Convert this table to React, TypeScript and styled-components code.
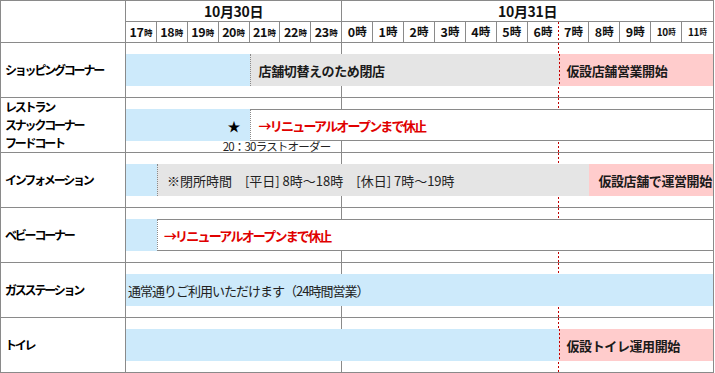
import React from "react";
import styled, { createGlobalStyle, css } from "styled-components";

const LINE = "#8a8a8a";
const RED_LINE = "#c00000";

const GlobalStyle = createGlobalStyle`
  html, body { margin: 0; padding: 0; background: #ffffff; }
  body {
    font-family: "Noto Sans CJK JP", "Noto Sans", sans-serif;
    color: #111;
  }
`;

const Table = styled.div`
  box-sizing: border-box;
  width: 714px;
  border: 1px solid ${LINE};
  background: #fff;
`;

const gridCols = css`
  display: grid;
  grid-template-columns: 125px repeat(19, minmax(0, 1fr));
`;

const HeaderGrid = styled.div`
  ${gridCols};
  grid-template-rows: 21px 20px;
`;

const Corner = styled.div`
  grid-column: 1;
  grid-row: 1 / 3;
  border-right: 1px solid ${LINE};
`;

const DateCell = styled.div<{ $from: number; $to: number; $divider?: boolean }>`
  grid-row: 1;
  grid-column: ${(p) => p.$from + 1} / ${(p) => p.$to + 2};
  border-bottom: 1px solid ${LINE};
  ${(p) => p.$divider && `border-right: 1px solid ${LINE};`}
  display: flex;
  align-items: center;
  justify-content: center;
  font-size: 14px;
  font-weight: 700;
  letter-spacing: -0.3px;
  line-height: 1;
`;

const HourCell = styled.div<{ $edge: "solid" | "red" | "none" }>`
  grid-row: 2;
  display: flex;
  align-items: center;
  justify-content: center;
  white-space: nowrap;
  font-weight: 700;
  line-height: 1;
  ${(p) => p.$edge === "solid" && `border-right: 1px solid ${LINE};`}
  ${(p) =>
    p.$edge === "red" &&
    `background: linear-gradient(to bottom, ${RED_LINE} 50%, transparent 50%) right top / 1px 4px repeat-y;`}
`;

const Num = styled.span<{ $kind: "a" | "b" | "c" }>`
  font-size: ${(p) => (p.$kind === "c" ? "10px" : "12.5px")};
  letter-spacing: -0.4px;
`;

const Ji = styled.span<{ $kind: "a" | "b" | "c" }>`
  font-size: ${(p) => (p.$kind === "a" ? "8.5px" : p.$kind === "b" ? "11.5px" : "7.5px")};
  margin-left: 0.5px;
`;

const BodyRow = styled.div`
  ${gridCols};
  grid-template-rows: 11px 32px 11px;
  border-top: 1px solid ${LINE};
`;

const RowLabel = styled.div`
  grid-column: 1;
  grid-row: 1 / -1;
  border-right: 1px solid ${LINE};
  display: flex;
  flex-direction: column;
  justify-content: center;
  padding-left: 4px;
  font-size: 12px;
  font-weight: 700;
  letter-spacing: -2.2px;
  line-height: 18px;
  white-space: nowrap;
  color: #000;
`;

const Guide = styled.div<{ $from: number; $to: number; $red?: boolean }>`
  grid-row: 1 / -1;
  grid-column: ${(p) => p.$from + 1} / ${(p) => p.$to + 2};
  ${(p) =>
    p.$red
      ? `background: linear-gradient(to bottom, ${RED_LINE} 50%, transparent 50%) right top / 1px 4px repeat-y;`
      : `border-right: 1px solid ${LINE};`}
`;

type Tone = "blue" | "gray" | "pink" | "box";

const toneBg: Record<Tone, string> = {
  blue: "#cdeafb",
  gray: "#e5e5e5",
  pink: "#ffcccc",
  box: "#ffffff",
};

const Bar = styled.div<{
  $from: number;
  $to: number;
  $tone: Tone;
  $edge?: "gray" | "red";
  $align?: "start" | "end";
  $pad?: number;
}>`
  grid-row: 2;
  grid-column: ${(p) => p.$from + 1} / ${(p) => p.$to + 2};
  background: ${(p) => toneBg[p.$tone]};
  ${(p) =>
    p.$tone === "box" &&
    `border-top: 1px solid ${LINE}; border-bottom: 1px solid ${LINE}; box-sizing: border-box;`}
  ${(p) => p.$edge === "gray" && `border-left: 1px dotted ${LINE};`}
  ${(p) =>
    p.$edge === "red" &&
    `background-image: linear-gradient(to bottom, ${RED_LINE} 50%, transparent 50%);
     background-size: 1px 4px; background-repeat: repeat-y; background-position: left top;`}
  display: flex;
  align-items: center;
  justify-content: ${(p) => (p.$align === "end" ? "flex-end" : "flex-start")};
  padding: ${(p) => (p.$align === "end" ? `0 ${p.$pad ?? 8}px 0 0` : `0 0 0 ${p.$pad ?? 8}px`)};
  overflow: hidden;
  white-space: nowrap;
  min-width: 0;
`;

const StrongText = styled.span`
  font-size: 13px;
  font-weight: 700;
  letter-spacing: -0.4px;
  color: #1a1a1a;
`;

const AlertText = styled.span`
  font-size: 13px;
  font-weight: 700;
  letter-spacing: -1.8px;
  color: #e00000;
`;

const PlainText = styled.span<{ $tight?: number }>`
  font-size: 13px;
  font-weight: 400;
  letter-spacing: ${(p) => p.$tight ?? -0.5}px;
  color: #222;
`;

const Star = styled.span`
  font-size: 13px;
  color: #000;
`;

const Note = styled.div<{ $from: number; $to: number }>`
  grid-row: 3;
  grid-column: ${(p) => p.$from + 1} / ${(p) => p.$to + 2};
  padding-left: 4px;
  font-size: 11.5px;
  line-height: 11px;
  letter-spacing: -0.8px;
  white-space: nowrap;
  color: #222;
`;

const hours: { n: string; kind: "a" | "b" | "c" }[] = [
  ...["17", "18", "19", "20", "21", "22", "23"].map((n) => ({ n, kind: "a" as const })),
  ...["0", "1", "2", "3", "4", "5", "6", "7", "8", "9"].map((n) => ({ n, kind: "b" as const })),
  ...["10", "11"].map((n) => ({ n, kind: "c" as const })),
];

const Guides = () => (
  <>
    <Guide $from={1} $to={7} />
    <Guide $from={8} $to={14} $red />
  </>
);

export default function App() {
  return (
    <>
      <GlobalStyle />
      <Table>
        <HeaderGrid>
          <Corner />
          <DateCell $from={1} $to={7} $divider>
            10月30日
          </DateCell>
          <DateCell $from={8} $to={19}>
            10月31日
          </DateCell>
          {hours.map((h, i) => (
            <HourCell
              key={h.n}
              $edge={i === 13 ? "red" : i === 18 ? "none" : "solid"}
            >
              <Num $kind={h.kind}>{h.n}</Num>
              <Ji $kind={h.kind}>時</Ji>
            </HourCell>
          ))}
        </HeaderGrid>

        <BodyRow>
          <RowLabel>ショッピングコーナー</RowLabel>
          <Guides />
          <Bar $from={1} $to={4} $tone="blue" />
          <Bar $from={5} $to={14} $tone="gray" $edge="gray">
            <StrongText>店舗切替えのため閉店</StrongText>
          </Bar>
          <Bar $from={15} $to={19} $tone="pink" $edge="red">
            <StrongText>仮設店舗営業開始</StrongText>
          </Bar>
        </BodyRow>

        <BodyRow>
          <RowLabel>
            <span>レストラン</span>
            <span>スナックコーナー</span>
            <span>フードコート</span>
          </RowLabel>
          <Guides />
          <Bar $from={1} $to={4} $tone="blue" $align="end" $pad={9}>
            <Star>★</Star>
          </Bar>
          <Bar $from={5} $to={19} $tone="box" $edge="gray">
            <AlertText>→リニューアルオープンまで休止</AlertText>
          </Bar>
          <Note $from={4} $to={8}>20：30ラストオーダー</Note>
        </BodyRow>

        <BodyRow>
          <RowLabel>インフォメーション</RowLabel>
          <Guides />
          <Bar $from={1} $to={1} $tone="blue" />
          <Bar $from={2} $to={15} $tone="gray" $edge="gray" $pad={9}>
            <PlainText $tight={0}>※閉所時間　[平日] 8時～18時　[休日] 7時～19時</PlainText>
          </Bar>
          <Bar $from={16} $to={19} $tone="pink" $pad={9}>
            <StrongText>仮設店舗で運営開始</StrongText>
          </Bar>
        </BodyRow>

        <BodyRow>
          <RowLabel>ベビーコーナー</RowLabel>
          <Guides />
          <Bar $from={1} $to={1} $tone="blue" />
          <Bar $from={2} $to={19} $tone="box" $edge="gray" $pad={6}>
            <AlertText>→リニューアルオープンまで休止</AlertText>
          </Bar>
        </BodyRow>

        <BodyRow>
          <RowLabel>ガスステーション</RowLabel>
          <Guides />
          <Bar $from={1} $to={19} $tone="blue" $pad={2}>
            <PlainText $tight={-1}>通常通りご利用いただけます（24時間営業）</PlainText>
          </Bar>
        </BodyRow>

        <BodyRow>
          <RowLabel>トイレ</RowLabel>
          <Guides />
          <Bar $from={1} $to={14} $tone="blue" />
          <Bar $from={15} $to={19} $tone="pink" $edge="red">
            <StrongText>仮設トイレ運用開始</StrongText>
          </Bar>
        </BodyRow>
      </Table>
    </>
  );
}
